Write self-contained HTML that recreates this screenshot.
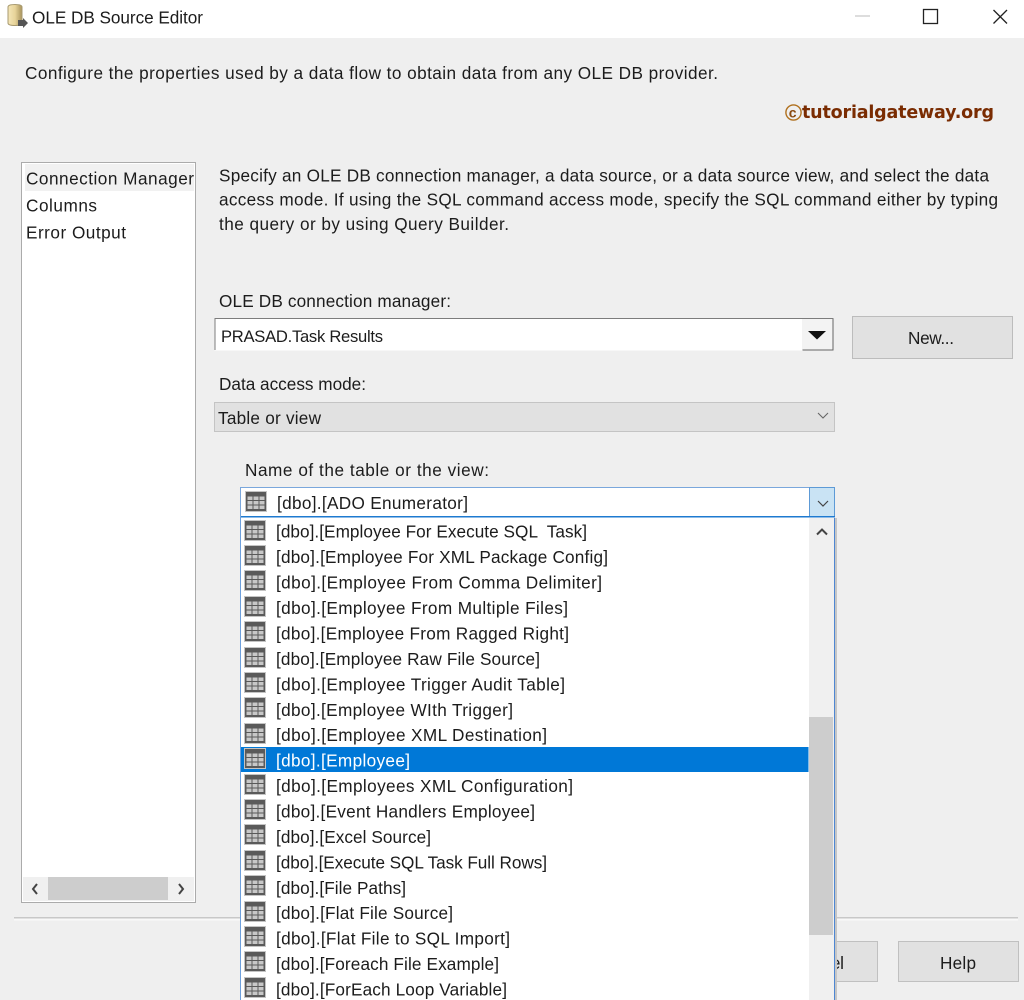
<!DOCTYPE html>
<html><head><meta charset="utf-8"><title>OLE DB Source Editor</title>
<style>
html,body{margin:0;padding:0;width:1024px;height:1000px;overflow:hidden;background:#efefef}
svg{display:block;filter:blur(.3px)}
text{font-family:"Liberation Sans",sans-serif;font-size:17.2px;fill:#1c1c1c;white-space:pre}
</style></head><body>
<svg width="1024" height="1000" viewBox="0 0 1024 1000" xmlns="http://www.w3.org/2000/svg" xml:space="preserve">
<defs>
<g id="t">
<rect x="0" y="0" width="22" height="21" fill="#c4c4c4"/>
<rect x="1" y="1" width="20" height="19" fill="#5a5a5a"/>
<rect x="2.500" y="5.500" width="5" height="3.500" fill="#c8c8c8"/><rect x="8.500" y="5.500" width="5" height="3.500" fill="#c8c8c8"/><rect x="14.500" y="5.500" width="5" height="3.500" fill="#c8c8c8"/>
<rect x="2.500" y="10" width="5" height="3.500" fill="#c8c8c8"/><rect x="8.500" y="10" width="5" height="3.500" fill="#c8c8c8"/><rect x="14.500" y="10" width="5" height="3.500" fill="#c8c8c8"/>
<rect x="2.500" y="14.500" width="5" height="3.500" fill="#c8c8c8"/><rect x="8.500" y="14.500" width="5" height="3.500" fill="#c8c8c8"/><rect x="14.500" y="14.500" width="5" height="3.500" fill="#c8c8c8"/>
</g>
<linearGradient id="cyl" x1="0" x2="1" y1="0" y2="0"><stop offset="0" stop-color="#f4e6b8"/><stop offset=".5" stop-color="#e8d49a"/><stop offset="1" stop-color="#a8935c"/></linearGradient>
</defs>

<!-- title bar -->
<rect width="1024" height="38" fill="#fff"/>
<path d="M8 7 Q8 4.500 15 4.500 Q22 4.500 22 7 V23 Q22 25.500 15 25.500 Q8 25.500 8 23 Z" fill="url(#cyl)" stroke="#a89a70" stroke-width="1"/>
<path d="M18 20 H23 V18 L28 23 L23 28 V26 H18 Z" fill="#555"/>
<text x="32" y="23.500" textLength="171">OLE DB Source Editor</text>
<rect x="855" y="15.500" width="15" height="1" fill="#bbb"/>
<rect x="923.500" y="9.500" width="14" height="14" fill="none" stroke="#222" stroke-width="1.300"/>
<path d="M993.500 10 L1007 23.500 M1007 10 L993.500 23.500" stroke="#222" stroke-width="1.300" fill="none"/>

<text x="25" y="79" textLength="693">Configure the properties used by a data flow to obtain data from any OLE DB provider.</text>
<circle cx="793.500" cy="112.500" r="7.600" fill="none" stroke="#b0701e" stroke-width="1.400"/>
<text x="788.800" y="117.500" style="font-size:14px;font-weight:bold;fill:#8a4a10">c</text>
<text x="802" y="118" textLength="192" style="font-family:'DejaVu Sans',sans-serif;font-weight:bold;font-size:17.500px;fill:#7a2c02">tutorialgateway.org</text>

<!-- left panel -->
<rect x="21.500" y="162.500" width="174" height="740" fill="#fff" stroke="#ababab"/>
<rect x="25" y="164" width="169" height="27" fill="#f1f1f1"/>
<text x="26" y="184.500" textLength="168">Connection Manager</text>
<text x="26" y="211.500" textLength="71">Columns</text>
<text x="26" y="238.500" textLength="100">Error Output</text>
<rect x="23" y="877" width="171" height="24" fill="#f0f0f0"/>
<rect x="48" y="877" width="120" height="23" fill="#cdcdcd"/>
<path d="M37 884 L33 889 L37 894" stroke="#444" stroke-width="2" fill="none"/>
<path d="M179 884 L183 889 L179 894" stroke="#444" stroke-width="2" fill="none"/>

<!-- description -->
<text x="219" y="181.500" textLength="770">Specify an OLE DB connection manager, a data source, or a data source view, and select the data</text>
<text x="219" y="205.500" textLength="779">access mode. If using the SQL command access mode, specify the SQL command either by typing</text>
<text x="219" y="230" textLength="290">the query or by using Query Builder.</text>

<text x="219" y="307" textLength="232">OLE DB connection manager:</text>
<rect x="214.500" y="318.500" width="619" height="32" fill="#fff"/>
<path d="M215 350 V318.500 H833.500" stroke="#7c7c7c" fill="none" stroke-width="1"/>
<rect x="802" y="319" width="31" height="31" fill="#f3f3f3"/>
<path d="M802.500 350 H833 V319" stroke="#666" fill="none"/>
<path d="M808 331 H826 L817 339.500 Z" fill="#111"/>
<text x="221" y="342" textLength="162" style="font-size:16.600px">PRASAD.Task Results</text>

<rect x="852.500" y="316.500" width="160" height="42" fill="#e1e1e1" stroke="#bcbcbc"/>
<text x="908" y="344" textLength="46">New...</text>

<text x="219" y="390" textLength="147">Data access mode:</text>
<rect x="214.500" y="402.500" width="620" height="29" fill="#e1e1e1" stroke="#c4c4c4"/>
<text x="218" y="424" textLength="103">Table or view</text>
<path d="M818 413 L823 418 L828 413" stroke="#666" stroke-width="1.100" fill="none"/>

<text x="245" y="476" textLength="244">Name of the table or the view:</text>

<!-- bottom buttons (behind list) -->
<rect x="790.500" y="941.500" width="87" height="40" fill="#e1e1e1" stroke="#c0c0c0"/>
<text x="792" y="969" textLength="52">Cancel</text>
<rect x="898.500" y="941.500" width="120" height="40" fill="#e1e1e1" stroke="#c0c0c0"/>
<text x="940" y="969" textLength="36">Help</text>

<!-- separator -->
<rect x="14" y="917" width="1004" height="1.500" fill="#c8c8c8"/><rect x="14" y="918.500" width="1004" height="2" fill="#f8f8f8"/>

<!-- combo -->
<rect x="240.500" y="487.500" width="594" height="29" fill="#fff" stroke="#7aa7dc"/>
<rect x="809.500" y="487.500" width="25" height="29" fill="#c9e3f4" stroke="#5d9ad6"/>
<path d="M818 501 L823 506 L828 501" stroke="#444" stroke-width="1.200" fill="none"/>
<use href="#t" x="245" y="491"/>
<text x="277" y="509" textLength="191">[dbo].[ADO Enumerator]</text>

<!-- list -->
<rect x="241" y="517" width="594" height="483" fill="#fff"/>
<rect x="835" y="518" width="2" height="482" fill="#c6c6c6"/>
<rect x="240" y="517" width="1" height="483" fill="#6c9fdc"/>
<rect x="834" y="518" width="1" height="482" fill="#4d86d2"/>
<rect x="241" y="516" width="594" height="1.500" fill="#1e7ad0"/>
<rect x="809" y="518" width="25" height="482" fill="#f0f0f0"/>
<rect x="809" y="717" width="24" height="218" fill="#cdcdcd"/>
<path d="M817 534.500 L822 529.500 L827 534.500" stroke="#444" stroke-width="2" fill="none"/>
<rect x="241" y="747" width="567.500" height="25" fill="#0078d7"/>

<use href="#t" x="244" y="520"/><text x="276" y="537.500" textLength="311">[dbo].[Employee For Execute SQL  Task]</text>
<use href="#t" x="244" y="545"/><text x="276" y="563" textLength="332">[dbo].[Employee For XML Package Config]</text>
<use href="#t" x="244" y="570"/><text x="276" y="588.500" textLength="326">[dbo].[Employee From Comma Delimiter]</text>
<use href="#t" x="244" y="596"/><text x="276" y="614" textLength="292">[dbo].[Employee From Multiple Files]</text>
<use href="#t" x="244" y="621"/><text x="276" y="639.500" textLength="293">[dbo].[Employee From Ragged Right]</text>
<use href="#t" x="244" y="647"/><text x="276" y="665" textLength="264">[dbo].[Employee Raw File Source]</text>
<use href="#t" x="244" y="672"/><text x="276" y="690.500" textLength="289">[dbo].[Employee Trigger Audit Table]</text>
<use href="#t" x="244" y="697"/><text x="276" y="716" textLength="237">[dbo].[Employee WIth Trigger]</text>
<use href="#t" x="244" y="723"/><text x="276" y="741" textLength="271">[dbo].[Employee XML Destination]</text>
<use href="#t" x="244" y="748"/><text x="276" y="766.500" textLength="134" style="fill:#fff">[dbo].[Employee]</text>
<use href="#t" x="244" y="774"/><text x="276" y="792" textLength="297">[dbo].[Employees XML Configuration]</text>
<use href="#t" x="244" y="799"/><text x="276" y="817.500" textLength="259">[dbo].[Event Handlers Employee]</text>
<use href="#t" x="244" y="824"/><text x="276" y="843" textLength="155">[dbo].[Excel Source]</text>
<use href="#t" x="244" y="850"/><text x="276" y="868.500" textLength="271">[dbo].[Execute SQL Task Full Rows]</text>
<use href="#t" x="244" y="875"/><text x="276" y="894" textLength="130">[dbo].[File Paths]</text>
<use href="#t" x="244" y="901"/><text x="276" y="919" textLength="177">[dbo].[Flat File Source]</text>
<use href="#t" x="244" y="926"/><text x="276" y="944.500" textLength="234">[dbo].[Flat File to SQL Import]</text>
<use href="#t" x="244" y="951"/><text x="276" y="970" textLength="223">[dbo].[Foreach File Example]</text>
<use href="#t" x="244" y="977"/><text x="276" y="995.500" textLength="231">[dbo].[ForEach Loop Variable]</text>
</svg>
</body></html>
